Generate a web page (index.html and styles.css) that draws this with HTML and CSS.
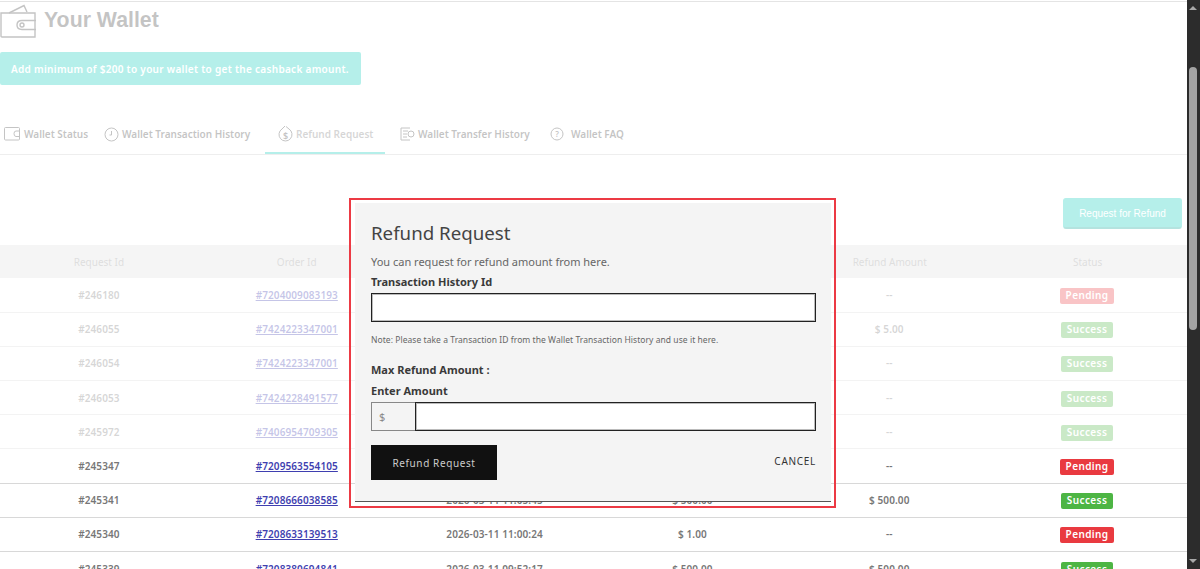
FILE: index.html
```html
<!DOCTYPE html>
<html lang="en">
<head>
    <meta charset="UTF-8">
    <meta name="viewport" content="width=device-width, initial-scale=1.0">
    <title>Your Wallet</title>
    <link rel="stylesheet" href="styles.css">
</head>
<body>

<div class="shell">
    <div class="page">
        <div class="title-row">
            <svg class="wallet-icon" width="38" height="36" viewBox="0 0 38 36" fill="none" stroke="#3a3a3a" stroke-width="1.4">
                <path d="M9 11 L24 3.5 L27 10"/>
                <path d="M1 11 H35 V35 H2 Q1 35 1 34 Z"/>
                <path d="M36 18.5 H22 Q17 18.5 17 23 Q17 27.5 22 27.5 H36"/>
                <circle cx="22" cy="23" r="2"/>
            </svg>
            <h1>Your Wallet</h1>
        </div>

        <div class="banner">Add minimum of $200 to your wallet to get the cashback amount.</div>

        <div class="tabs">
            <a class="tab tab-status" href="#">
                <svg width="17" height="14" viewBox="0 0 17 14" fill="none" stroke="#3a3a3a" stroke-width="1">
                    <rect x="0.5" y="0.5" width="15" height="12.5" rx="1"/>
                    <path d="M16 4 H12 Q10 4 10 6.7 Q10 9.5 12 9.5 H16"/>
                </svg>
                Wallet Status
            </a>
            <a class="tab tab-history" href="#">
                <svg width="15" height="15" viewBox="0 0 15 15" fill="none" stroke="#3a3a3a" stroke-width="1">
                    <circle cx="7.5" cy="7.5" r="6.5"/>
                    <path d="M7.5 4 V8 H5.5"/>
                </svg>
                Wallet Transaction History
            </a>
            <a class="tab tab-refund active" href="#">
                <svg width="15" height="18" viewBox="0 0 15 18" fill="none" stroke="#3a3a3a" stroke-width="1">
                    <path d="M4 4 A6.5 6.5 0 1 0 11 4"/>
                    <path d="M4 4 L7 1 M11 4 L8 1.5"/>
                    <text x="7.5" y="13.5" font-size="9" text-anchor="middle" fill="#3a3a3a" stroke="none">$</text>
                </svg>
                Refund Request
            </a>
            <a class="tab tab-transfer" href="#">
                <svg width="15" height="14" viewBox="0 0 15 14" fill="none" stroke="#3a3a3a" stroke-width="1">
                    <path d="M10 1 H1 V13 H10"/>
                    <path d="M3 4 H8 M3 7 H7 M3 10 H7"/>
                    <circle cx="11" cy="7" r="3"/>
                </svg>
                Wallet Transfer History
            </a>
            <a class="tab tab-faq" href="#">
                <svg width="14" height="14" viewBox="0 0 14 14" fill="none" stroke="#3a3a3a" stroke-width="1">
                    <circle cx="7" cy="7" r="6"/>
                    <text x="7" y="10" font-size="8" text-anchor="middle" fill="#3a3a3a" stroke="none">?</text>
                </svg>
                Wallet FAQ
            </a>
        </div>

        <div class="actions">
            <button class="request-btn">Request for Refund</button>
        </div>

        <table class="refunds">
            <thead>
                <tr>
                    <th>Request Id</th>
                    <th>Order Id</th>
                    <th></th>
                    <th></th>
                    <th>Refund Amount</th>
                    <th>Status</th>
                </tr>
            </thead>
            <tbody>
                <tr>
                    <td>#246180</td>
                    <td><a href="#">#7204009083193</a></td>
                    <td></td>
                    <td></td>
                    <td>--</td>
                    <td><span class="badge pending">Pending</span></td>
                </tr>
                <tr>
                    <td>#246055</td>
                    <td><a href="#">#7424223347001</a></td>
                    <td></td>
                    <td></td>
                    <td>$ 5.00</td>
                    <td><span class="badge success">Success</span></td>
                </tr>
                <tr>
                    <td>#246054</td>
                    <td><a href="#">#7424223347001</a></td>
                    <td></td>
                    <td></td>
                    <td>--</td>
                    <td><span class="badge success">Success</span></td>
                </tr>
                <tr>
                    <td>#246053</td>
                    <td><a href="#">#7424228491577</a></td>
                    <td></td>
                    <td></td>
                    <td>--</td>
                    <td><span class="badge success">Success</span></td>
                </tr>
                <tr>
                    <td>#245972</td>
                    <td><a href="#">#7406954709305</a></td>
                    <td></td>
                    <td></td>
                    <td>--</td>
                    <td><span class="badge success">Success</span></td>
                </tr>
                <tr>
                    <td>#245347</td>
                    <td><a href="#">#7209563554105</a></td>
                    <td></td>
                    <td></td>
                    <td>--</td>
                    <td><span class="badge pending">Pending</span></td>
                </tr>
                <tr>
                    <td>#245341</td>
                    <td><a href="#">#7208666038585</a></td>
                    <td>2026-03-11 11:05:45</td>
                    <td>$ 500.00</td>
                    <td>$ 500.00</td>
                    <td><span class="badge success">Success</span></td>
                </tr>
                <tr>
                    <td>#245340</td>
                    <td><a href="#">#7208633139513</a></td>
                    <td>2026-03-11 11:00:24</td>
                    <td>$ 1.00</td>
                    <td>--</td>
                    <td><span class="badge pending">Pending</span></td>
                </tr>
                <tr>
                    <td>#245339</td>
                    <td><a href="#">#7208380694841</a></td>
                    <td>2026-03-11 09:52:17</td>
                    <td>$ 500.00</td>
                    <td>$ 500.00</td>
                    <td><span class="badge success">Success</span></td>
                </tr>
            </tbody>
        </table>

        <div class="fade"></div>

        <div class="modal-frame">
            <div class="modal">
                <h2>Refund Request</h2>
                <p class="intro">You can request for refund amount from here.</p>
                <label class="field-label history-label">Transaction History Id</label>
                <input class="text-input" type="text">
                <p class="note">Note: Please take a Transaction ID from the Wallet Transaction History and use it here.</p>
                <div class="field-label max-label">Max Refund Amount :</div>
                <label class="field-label amount-label">Enter Amount</label>
                <div class="amount-group">
                    <span class="prefix">$</span>
                    <input class="text-input" type="text">
                </div>
                <div class="modal-footer">
                    <button class="submit-btn">Refund Request</button>
                    <a class="cancel" href="#">CANCEL</a>
                </div>
            </div>
        </div>
    </div>

    <div class="scrollbar">
        <span class="arrow-up"></span>
        <span class="thumb"></span>
        <span class="arrow-down"></span>
    </div>
</div>

</body>
</html>
```

FILE: styles.css
```css
* {
    box-sizing: border-box;
}

body {
    margin: 0;
    font-family: "Noto Sans", Arial, sans-serif;
    color: #3a3a3a;
    background-color: #fff;
}

.shell {
    display: flex;
    height: 569px;
    overflow: hidden;
}

.page {
    position: relative;
    flex: 1;
    min-width: 0;
    margin-top: 1px;
    border-top: 1px solid #e4e4e4;
    overflow: hidden;
}

/* Title */
.title-row {
    display: flex;
    align-items: center;
    gap: 6px;
    height: 36px;
}

.wallet-icon {
    flex: none;
}

.title-row h1 {
    margin: 0;
    font-family: "Liberation Sans", Arial, sans-serif;
    font-size: 21.3px;
    font-weight: bold;
}

.banner {
    width: 361px;
    height: 33px;
    margin-top: 14px;
    padding: 0 11px;
    background-color: #08cab9;
    border-radius: 2px;
    color: #fff;
    font-size: 10px;
    font-weight: 600;
    line-height: 34px;
    letter-spacing: 0.3px;
    white-space: nowrap;
}

/* Tabs */
.tabs {
    display: flex;
    height: 41px;
    margin-top: 29px;
    border-bottom: 1px solid #c5c5c5;
}

.tab {
    display: flex;
    align-items: center;
    gap: 3px;
    height: 40px;
    color: #3a3a3a;
    font-size: 10px;
    font-weight: 600;
    text-decoration: none;
    white-space: nowrap;
}

.tab svg {
    flex: none;
}

.tab-status {
    width: 104px;
    padding-left: 4px;
}

.tab-history {
    width: 161px;
}

.tab-refund {
    width: 120px;
    padding: 2px 0 0 13px;
    color: #777;
    border-bottom: 2px solid #08cab9;
}

.tab-transfer {
    width: 150px;
    padding-left: 15px;
}

.tab-faq {
    padding-left: 15px;
    gap: 7px;
}

/* Request button */
.actions {
    display: flex;
    justify-content: flex-end;
    height: 90px;
    padding: 43px 5px 0 0;
}

.request-btn {
    width: 119px;
    height: 31px;
    background-color: #08cab9;
    border: 1px solid #08cab9;
    border-bottom: 2px solid #06a193;
    border-radius: 3px;
    color: #fff;
    font-family: "Liberation Sans", Arial, sans-serif;
    font-size: 10px;
}

/* Table */
.refunds {
    width: 100%;
    table-layout: fixed;
    border-collapse: collapse;
    font-size: 10px;
    text-align: center;
}

.refunds th {
    height: 33px;
    background-color: #dedede;
    color: #8f8f8f;
    font-weight: 400;
}

.refunds td {
    height: 34.2px;
    padding: 0;
    border-bottom: 1px solid #d8d8d8;
    color: #777;
    font-weight: 600;
    letter-spacing: 0.1px;
}

.refunds th:nth-child(n+5),
.refunds td:nth-child(n+5) {
    padding-right: 2px;
}

.refunds td a {
    color: #3f3fb0;
}

.badge {
    display: inline-block;
    width: 54px;
    margin-top: 2px;
    padding: 1px 0 2px;
    border-radius: 2px;
    color: #fff;
    font-size: 10px;
    line-height: 13px;
    letter-spacing: 0.4px;
}

.badge.pending {
    background-color: #e93a40;
}

.badge.success {
    width: 52px;
    background-color: #4db544;
}

/* White wash over the upper part of the page */
.fade {
    position: absolute;
    top: 0;
    left: 0;
    right: 0;
    height: 447px;
    background-color: rgba(255, 255, 255, 0.7);
}

/* Modal */
.modal-frame {
    position: absolute;
    top: 196px;
    left: 349px;
    width: 487px;
    height: 310px;
    padding: 3px 3px 4px 4px;
    border: 2px solid #ec3a44;
}

.modal {
    height: 100%;
    padding: 16px 15px 0 16px;
    background-color: #f4f4f4;
    border-bottom: 1px solid #555;
}

.modal h2 {
    margin: 0;
    font-size: 18.7px;
    font-weight: 400;
    line-height: 28px;
    color: #444;
}

.intro {
    margin: 7px 0 0;
    font-size: 11px;
    line-height: 16px;
    color: #666;
}

.field-label {
    display: block;
    font-size: 11px;
    font-weight: 700;
    line-height: 15px;
    color: #3a3a3a;
}

.history-label {
    margin-top: 4px;
}

.text-input {
    display: block;
    width: 100%;
    height: 29px;
    margin-top: 4px;
    background-color: #fff;
    border: 1px solid #222;
    border-radius: 0;
    box-shadow: inset 0 0 0 1px #bbb;
}

.note {
    margin: 12px 0 0;
    font-size: 8.5px;
    line-height: 11px;
    letter-spacing: 0.05px;
    color: #666;
}

.max-label {
    margin-top: 17px;
}

.amount-label {
    margin-top: 6px;
}

.amount-group {
    display: flex;
    margin-top: 4px;
}

.prefix {
    flex: none;
    width: 44px;
    height: 29px;
    padding-left: 7px;
    border: 1px solid #888;
    border-right: none;
    font-size: 11px;
    line-height: 27px;
    color: #888;
}

.amount-group .text-input {
    flex: 1;
    margin-top: 0;
}

.modal-footer {
    display: flex;
    justify-content: space-between;
    align-items: center;
    margin-top: 14px;
}

.submit-btn {
    width: 126px;
    height: 35px;
    background-color: #111;
    border: none;
    color: #ccc;
    font-family: "Noto Sans", Arial, sans-serif;
    font-size: 10px;
    letter-spacing: 0.6px;
}

.cancel {
    margin-bottom: 4px;
    color: #333;
    font-size: 10px;
    text-decoration: none;
    letter-spacing: 0.7px;
}

/* Browser scrollbar */
.scrollbar {
    position: relative;
    flex: none;
    width: 13px;
    background-color: #2c2c2c;
}

.arrow-up,
.arrow-down {
    position: absolute;
    left: 2px;
    width: 0;
    height: 0;
    border-left: 4px solid transparent;
    border-right: 4px solid transparent;
}

.arrow-up {
    top: 6px;
    border-bottom: 4px solid #a8a8a8;
}

.arrow-down {
    bottom: 6px;
    border-top: 4px solid #a8a8a8;
}

.thumb {
    position: absolute;
    top: 67px;
    left: 2px;
    width: 8px;
    height: 263px;
    background-color: #a3a3a3;
    border-radius: 4px;
}
```
